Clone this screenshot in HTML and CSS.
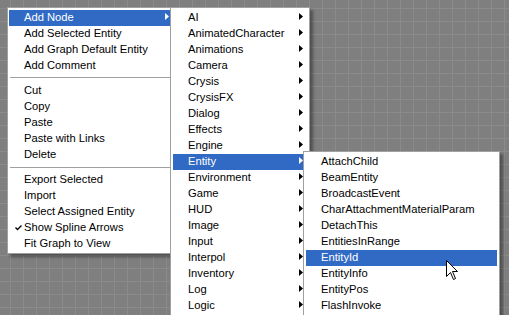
FILE: index.html
```html
<!DOCTYPE html>
<html>
<head>
<meta charset="utf-8">
<link rel="stylesheet" href="styles.css">
</head>
<body>
<div class="canvas">
  <div class="menu menu-main">
    <div class="item hl"><span class="label">Add Node</span><span class="arrow"></span></div>
    <div class="item"><span class="label">Add Selected Entity</span></div>
    <div class="item"><span class="label">Add Graph Default Entity</span></div>
    <div class="item"><span class="label">Add Comment</span></div>
    <div class="sep sep-a"></div>
    <div class="item"><span class="label">Cut</span></div>
    <div class="item"><span class="label">Copy</span></div>
    <div class="item"><span class="label">Paste</span></div>
    <div class="item"><span class="label">Paste with Links</span></div>
    <div class="item"><span class="label">Delete</span></div>
    <div class="sep"></div>
    <div class="item"><span class="label">Export Selected</span></div>
    <div class="item"><span class="label">Import</span></div>
    <div class="item"><span class="label">Select Assigned Entity</span></div>
    <div class="item"><svg class="check" width="7" height="6" viewBox="0 0 7 6"><path d="M0.5 2.5 L2.5 4.5 L6.5 0.5" fill="none" stroke="#000" stroke-width="1.3"/></svg><span class="label">Show Spline Arrows</span></div>
    <div class="item"><span class="label">Fit Graph to View</span></div>
  </div>

  <div class="menu menu-nodes">
    <div class="item"><span class="label">AI</span><span class="arrow"></span></div>
    <div class="item"><span class="label">AnimatedCharacter</span><span class="arrow"></span></div>
    <div class="item"><span class="label">Animations</span><span class="arrow"></span></div>
    <div class="item"><span class="label">Camera</span><span class="arrow"></span></div>
    <div class="item"><span class="label">Crysis</span><span class="arrow"></span></div>
    <div class="item"><span class="label">CrysisFX</span><span class="arrow"></span></div>
    <div class="item"><span class="label">Dialog</span><span class="arrow"></span></div>
    <div class="item"><span class="label">Effects</span><span class="arrow"></span></div>
    <div class="item"><span class="label">Engine</span><span class="arrow"></span></div>
    <div class="item hl"><span class="label">Entity</span><span class="arrow"></span></div>
    <div class="item"><span class="label">Environment</span><span class="arrow"></span></div>
    <div class="item"><span class="label">Game</span><span class="arrow"></span></div>
    <div class="item"><span class="label">HUD</span><span class="arrow"></span></div>
    <div class="item"><span class="label">Image</span><span class="arrow"></span></div>
    <div class="item"><span class="label">Input</span><span class="arrow"></span></div>
    <div class="item"><span class="label">Interpol</span><span class="arrow"></span></div>
    <div class="item"><span class="label">Inventory</span><span class="arrow"></span></div>
    <div class="item"><span class="label">Log</span><span class="arrow"></span></div>
    <div class="item"><span class="label">Logic</span><span class="arrow"></span></div>
  </div>

  <div class="menu menu-entity">
    <div class="item"><span class="label">AttachChild</span></div>
    <div class="item"><span class="label">BeamEntity</span></div>
    <div class="item"><span class="label">BroadcastEvent</span></div>
    <div class="item"><span class="label">CharAttachmentMaterialParam</span></div>
    <div class="item"><span class="label">DetachThis</span></div>
    <div class="item"><span class="label">EntitiesInRange</span></div>
    <div class="item hl"><span class="label">EntityId</span></div>
    <div class="item"><span class="label">EntityInfo</span></div>
    <div class="item"><span class="label">EntityPos</span></div>
    <div class="item"><span class="label">FlashInvoke</span></div>
  </div>

  <svg class="cursor" width="13" height="21" viewBox="0 0 13 21">
    <path d="M0.5 0.5 L0.5 16.5 L4.5 12.5 L7.5 19.5 L9.5 18.5 L6.5 11.5 L11.5 11.5 Z" fill="#fff" stroke="#000" stroke-width="1" stroke-linejoin="miter"/>
  </svg>
</div>
</body>
</html>
```

FILE: styles.css
```css
html, body {
  margin: 0;
  padding: 0;
}

body {
  width: 509px;
  height: 315px;
  overflow: hidden;
  font-family: "Liberation Sans", Arial, sans-serif;
  font-size: 11.2px;
  color: #000;
}

.canvas {
  position: relative;
  width: 509px;
  height: 315px;
  background-color: #7f7f7f;
  background-image:
    linear-gradient(to right, #8b8b8b 1px, transparent 1px),
    linear-gradient(to bottom, #8b8b8b 1px, transparent 1px);
  background-size: 13px 13px;
  background-position: 10px 8px;
  overflow: hidden;
}

.menu {
  position: absolute;
  box-sizing: border-box;
  background: #fff;
  border: 1px solid #a0a0a0;
  padding: 2px;
  display: flex;
  flex-direction: column;
  box-shadow: 3px 3px 3px rgba(0, 0, 0, 0.38);
}

.menu-main {
  left: 7px;
  top: 7px;
  width: 164px;
  padding: 2px 0 1px 1px;
  z-index: 1;
}

.menu-nodes {
  left: 170px;
  top: 7px;
  width: 140px;
  z-index: 2;
}

.menu-entity {
  left: 303px;
  top: 151px;
  width: 197px;
  z-index: 3;
}

.item {
  position: relative;
  display: flex;
  align-items: flex-start;
  box-sizing: border-box;
  height: 16px;
  line-height: 14px;
  padding: 0 1px 0 15px;
  white-space: nowrap;
}

.menu-nodes .item {
  padding-right: 4px;
}

.label {
  flex: 1;
}

.hl {
  background: #316ac5;
  color: #fff;
}

.arrow {
  width: 4px;
  height: 7px;
  margin-top: 3px;
  background: #000;
  clip-path: polygon(0 0, 100% 50%, 0 100%);
}

.hl .arrow {
  background: #fff;
}

.check {
  position: absolute;
  left: 6px;
  top: 5px;
}

.sep {
  height: 9px;
  box-sizing: border-box;
  padding-top: 4px;
  margin-left: 1px;
}

.sep::before {
  content: "";
  display: block;
  height: 1px;
  background: #a0a0a0;
}

.sep-a {
  padding-top: 3px;
}

.cursor {
  position: absolute;
  left: 446px;
  top: 260px;
  z-index: 5;
}
```
